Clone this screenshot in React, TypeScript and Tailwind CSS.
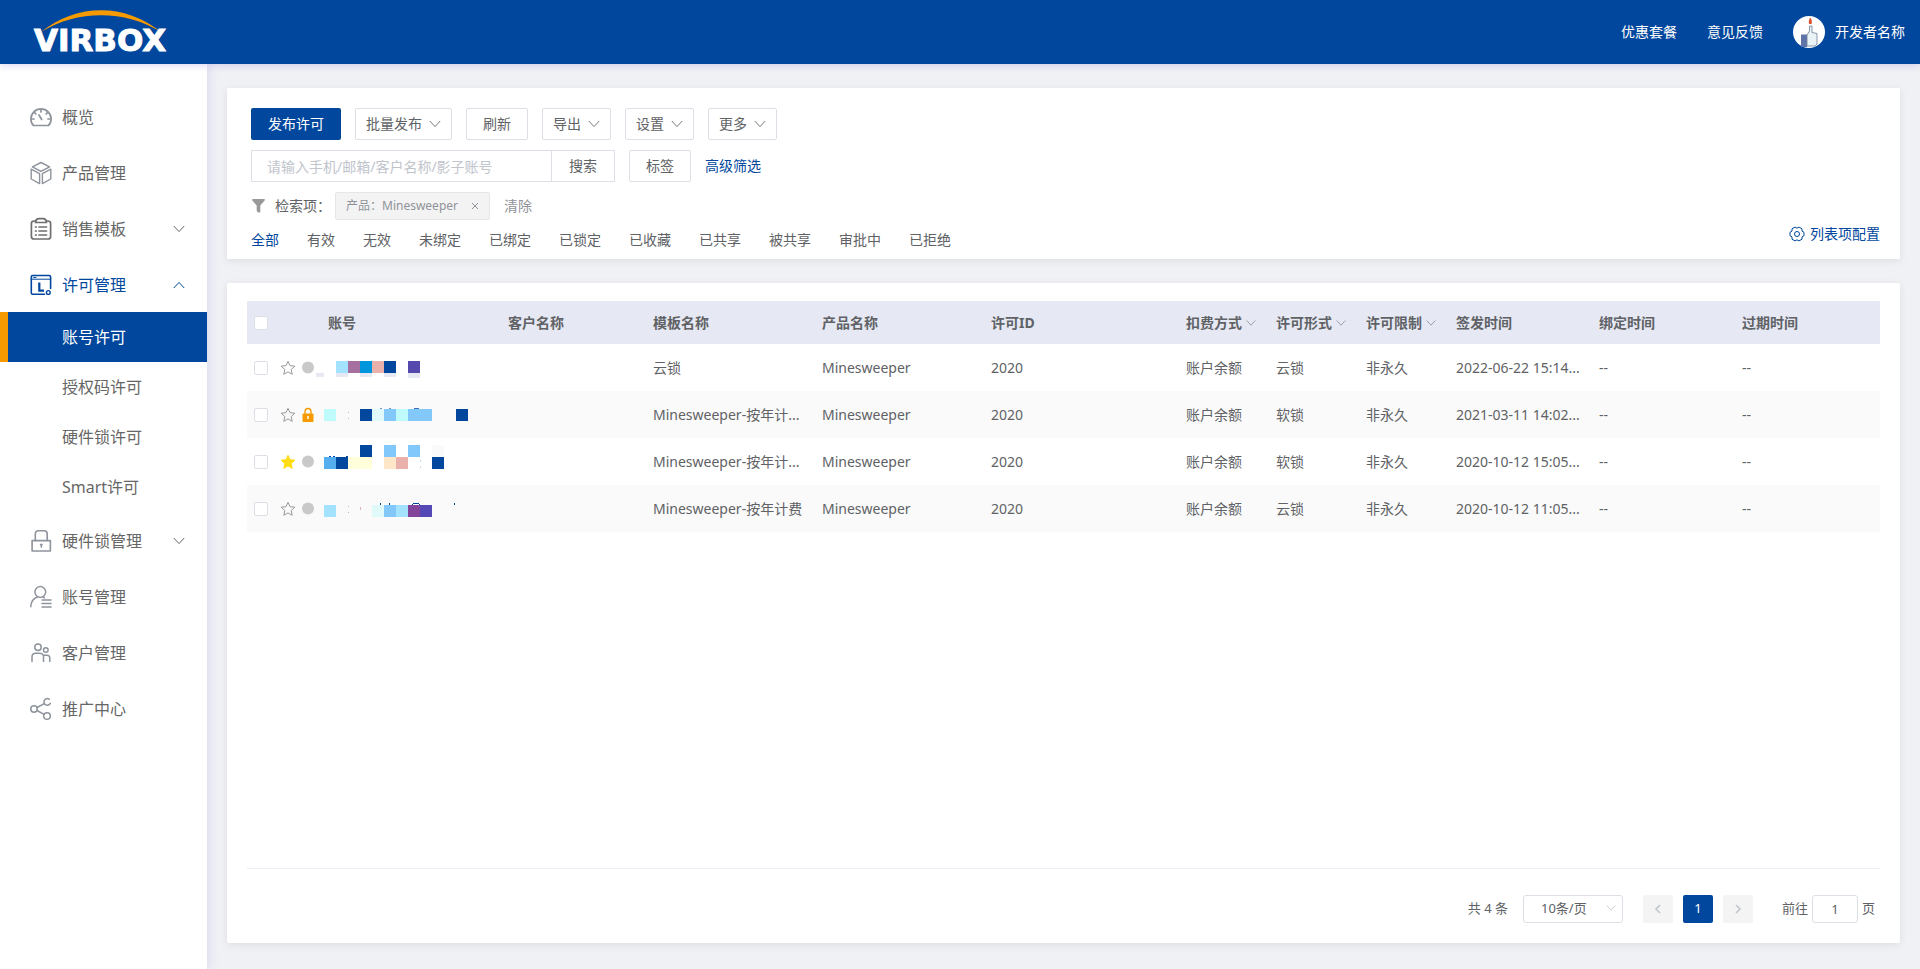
import React from "react";

const BLUE = "#00479d";

function Chevron({ up = false, className = "" }: { up?: boolean; className?: string }) {
  return (
    <svg viewBox="0 0 12 12" className={className} fill="none" stroke="currentColor" aria-hidden="true">
      <path d={up ? "M0.8 9L6 3.4L11.2 9" : "M0.8 3L6 8.6L11.2 3"} />
    </svg>
  );
}

function Logo() {
  return (
    <svg width="156" height="60" viewBox="0 0 156 60" role="img" aria-label="VIRBOX">
      <path d="M18 30C54 1 102 1 138 30C102 7.500 54 7.500 18 30Z" fill="#f59a00" />
      <text
        x="77"
        y="49"
        textAnchor="middle"
        fill="#fff"
        stroke="#fff"
        strokeWidth="1"
        fontFamily="DejaVu Sans, sans-serif"
        fontWeight="700"
        fontSize="31"
      >
        VIRBOX
      </text>
    </svg>
  );
}

const iconProps = {
  width: 24,
  height: 24,
  viewBox: "0 0 24 24",
  fill: "none",
  strokeLinecap: "round" as const,
  strokeLinejoin: "round" as const,
  "aria-hidden": true,
};

const icons: Record<string, React.ReactNode> = {
  gauge: (
    <svg {...iconProps} stroke="#8e949c" strokeWidth="1.7">
      <path d="M4.500 20.500C2.800 19 1.900 16.500 1.900 14A10.100 10.100 0 0 1 22.100 14C22.100 16.500 21.200 19 19.500 20.500Z" />
      <path d="M12 4.500V7M5.300 7.300L6.800 8.800M18.700 7.300L17.200 8.800M2.500 14H5M21.500 14H19M10 10L12.700 14.500" />
    </svg>
  ),
  cube: (
    <svg {...iconProps} stroke="#8e949c" strokeWidth="1.4">
      <path d="M12 1.500L20.600 5.800L12 10.400L3.400 5.800Z" />
      <path d="M2.200 8.200L10.600 12.600V22.600L2.200 18Z" />
      <path d="M21.800 8.200L13.400 12.600V22.600L21.800 18Z" />
    </svg>
  ),
  clipboard: (
    <svg {...iconProps} stroke="#6f6f6f" strokeWidth="1.7">
      <path d="M6.500 4H5C3.300 4 2.400 5 2.400 6.500V19.500C2.400 21.200 3.300 22 5 22H19C20.700 22 21.600 21.200 21.600 19.500V6.500C21.600 5 20.700 4 19 4H17.500" />
      <path d="M6.500 5.500C6.500 3 8 1.800 9.500 1.600H14.500C16 1.800 17.500 3 17.500 5.500Z" />
      <path d="M6.500 10H7.200M10 10H17.500M6.500 14H7.200M10 14H17.500M6.500 18H7.200M10 18H17.500" />
    </svg>
  ),
  license: (
    <svg {...iconProps} stroke={BLUE} strokeWidth="1.6">
      <path d="M15.500 21.200H3.600C2.600 21.200 2.300 20.800 2.300 20V4C2.300 3 2.800 2.500 3.600 2.500H20C21 2.500 21.600 3 21.600 4V15.500" />
      <path d="M2.300 6.200H21.600" strokeWidth="1" />
      <path d="M4.500 4.400H7" strokeWidth="1" />
      <path d="M10.300 9.500V17.600H15" strokeWidth="2.200" strokeLinecap="butt" strokeLinejoin="miter" />
      <circle cx="19.300" cy="19.500" r="1.900" strokeWidth="1.400" />
    </svg>
  ),
  lock: (
    <svg {...iconProps} stroke="#8e949c" strokeWidth="1.6">
      <path d="M3.100 11.600H21.400V22H3.100Z" />
      <path d="M6.300 11.500V5C6.300 2.800 7.300 1.800 9.500 1.800H15C17.200 1.800 18.200 2.800 18.200 5V11.500" />
      <path d="M12.300 15.400V18M11.600 15.600H13" />
    </svg>
  ),
  account: (
    <svg {...iconProps} stroke="#8e949c" strokeWidth="1.5">
      <circle cx="11.300" cy="7" r="5.400" />
      <path d="M1.800 21.700C2 16.500 4.500 13.300 8.500 12M14 12L15.500 12.800" />
      <path d="M13 14.900H22M13 18.400H22M13 21.900H22" />
    </svg>
  ),
  people: (
    <svg {...iconProps} stroke="#8e949c" strokeWidth="1.5">
      <circle cx="9" cy="6.300" r="3.200" />
      <circle cx="16.800" cy="9" r="2.300" />
      <path d="M3 20.500V16C3 13.500 4.500 12.200 6.500 12.200H10.500C12.500 12.200 14.500 13.500 14.500 15.500V20.500M14.500 14.200H18C20 14.200 20.800 15.200 20.800 17V20.500" />
    </svg>
  ),
  share: (
    <svg {...iconProps} stroke="#8e949c" strokeWidth="1.500">
      <circle cx="5" cy="12" r="3.200" />
      <circle cx="18" cy="19" r="3.300" />
      <path d="M20.300 2.300A3.300 3.300 0 1 0 21.300 6.200M8 10.500L14.800 6.800M8 13.500L15 17.300" />
    </svg>
  ),
};

function NavItem({ icon, label, open, active }: { icon: string; label: string; open?: boolean; active?: boolean }) {
  return (
    <a
      href="#"
      className={`flex h-14 items-center pt-0.5 pl-[29px] pr-[22px] text-base ${active ? "text-[#00479d]" : "text-[#666]"}`}
    >
      {icons[icon]}
      <span className="ml-[9px] flex-1">{label}</span>
      {open !== undefined && <Chevron up={open} className="size-3" />}
    </a>
  );
}

function Sidebar() {
  return (
    <nav className="w-[207px] shrink-0 bg-white pt-6 shadow-[0_0_10px_rgba(120,110,220,0.25)]">
      <NavItem icon="gauge" label="概览" />
      <NavItem icon="cube" label="产品管理" />
      <NavItem icon="clipboard" label="销售模板" open={false} />
      <NavItem icon="license" label="许可管理" open active />
      <a href="#" className="flex h-[50px] items-center border-l-8 border-[#f59a00] bg-[#00479d] pl-[54px] text-base text-white">
        账号许可
      </a>
      {["授权码许可", "硬件锁许可", "Smart许可"].map((t) => (
        <a key={t} href="#" className="flex h-[50px] items-center pl-[62px] text-base text-[#666]">
          {t}
        </a>
      ))}
      <NavItem icon="lock" label="硬件锁管理" open={false} />
      <NavItem icon="account" label="账号管理" />
      <NavItem icon="people" label="客户管理" />
      <NavItem icon="share" label="推广中心" />
    </nav>
  );
}

function Header() {
  return (
    <header className="relative z-10 flex h-16 items-center bg-[#00479d] pl-[23px] pr-[15px] text-sm text-white shadow-[0_1px_8px_rgba(120,110,220,0.3)]">
      <a href="#" className="mr-auto">
        <Logo />
      </a>
      <a href="#" className="mr-[30px]">优惠套餐</a>
      <a href="#" className="mr-[30px]">意见反馈</a>
      <a href="#" className="flex items-center gap-[10px]">
        <svg width="32" height="32" viewBox="0 0 32 32" aria-hidden="true">
          <circle cx="16" cy="16" r="16" fill="#fff" />
          <path d="M8 18.500H14V31H8Z" fill="#5f74a8" />
          <path d="M14 19L16.500 15V10H19V16.500L24 17.500V28L22 30H14Z" fill="#e9f2f4" stroke="#6f7f9c" strokeWidth="0.8" />
          <path d="M17.300 1.500C19 4 19 5.500 18.600 8H16C15.400 5.500 16 3.500 17.300 1.500Z" fill="#d9502a" />
        </svg>
        <span>开发者名称</span>
      </a>
    </header>
  );
}

const outline = "flex h-8 items-center justify-center rounded-xs border border-[#dcdfe6] bg-white text-sm text-[#606266]";

function DropButton({ label }: { label: string }) {
  return (
    <button type="button" className={`${outline} gap-[7px] px-[10px]`}>
      {label}
      <Chevron className="size-3 text-[#777]" />
    </button>
  );
}

function Filters() {
  const tabs = ["全部", "有效", "无效", "未绑定", "已绑定", "已锁定", "已收藏", "已共享", "被共享", "审批中", "已拒绝"];
  return (
    <section className="flex items-end bg-white pt-5 pr-5 pb-[9px] pl-6 text-sm shadow-[0_2px_8px_rgba(0,0,0,0.08)]">
      <div className="flex flex-1 flex-col">
        <div className="flex gap-[14px]">
          <button type="button" className="h-8 w-[90px] rounded-xs bg-[#00479d] text-sm text-white">发布许可</button>
          <DropButton label="批量发布" />
          <button type="button" className={`${outline} px-4`}>刷新</button>
          <DropButton label="导出" />
          <DropButton label="设置" />
          <DropButton label="更多" />
        </div>
        <form className="mt-[10px] flex items-center" onSubmit={(e) => e.preventDefault()}>
          <input
            aria-label="搜索"
            placeholder="请输入手机/邮箱/客户名称/影子账号"
            className="h-8 w-[301px] border border-[#dcdfe6] px-[15px] text-sm text-[#606266] placeholder:text-[#c0c4cc]"
          />
          <button type="submit" className="h-8 w-[63px] border border-l-0 border-[#dcdfe6] text-sm text-[#606266]">搜索</button>
          <button type="button" className={`${outline} ml-[14px] px-4`}>标签</button>
          <a href="#" className="ml-[14px] text-[#00479d]">高级筛选</a>
        </form>
        <div className="mt-[10px] flex h-7 items-center">
          <svg width="16" height="16" viewBox="0 0 16 16" fill="#999" aria-hidden="true">
            <path d="M1.300 1H13.700V2.500L9.300 7.500V14.500H7.500L5.700 13V7.500L1.300 2.500Z" />
          </svg>
          <span className="ml-2 w-[60px] text-[#606266]">检索项：</span>
          <span className="flex h-7 items-center rounded-xs border border-[#e6e6e8] bg-[#f3f3f4] px-[10px] text-xs text-[#909399]">
            产品：Minesweeper
            <button type="button" aria-label="移除" className="ml-[13px]">
              <svg width="8" height="8" viewBox="0 0 8 8" stroke="currentColor" aria-hidden="true">
                <path d="M1 1L7 7M7 1L1 7" />
              </svg>
            </button>
          </span>
          <button type="button" className="ml-[14px] text-sm text-[#909399]">清除</button>
        </div>
        <div className="mt-[10px] flex gap-7 leading-5">
          {tabs.map((t, i) => (
            <a key={t} href="#" className={i === 0 ? "text-[#00479d]" : "text-[#606266]"}>{t}</a>
          ))}
        </div>
      </div>
      <a href="#" className="mb-[6px] flex items-center gap-[5px] leading-5 text-[#00479d]">
        <svg width="16" height="16" viewBox="0 0 16 16" fill="none" stroke="currentColor" strokeLinejoin="round" aria-hidden="true">
          <path d="M15 6.300V9.700L13 10.900V13.200L10 14.900L8 13.800L6 14.900L3 13.200V10.900L1 9.700V6.300L3 5.100V2.800L6 1.100L8 2.200L10 1.100L13 2.800V5.100Z" />
          <circle cx="8" cy="8" r="2.500" />
        </svg>
        列表项配置
      </a>
    </section>
  );
}

type Block = [number, number, number, number, string];

const L = "#e6e9f3";
const masks: Block[][] = [
  [
    [0, 29, 8, 4, L], [20, 17, 12, 12, "#a3e3ff"], [32, 17, 12, 12, "#a56f9f"], [44, 17, 12, 12, "#0096de"],
    [56, 17, 12, 12, "#e9b0ac"], [68, 17, 12, 12, BLUE], [92, 17, 12, 12, "#5549ad"],
    [20, 29, 12, 4, L], [44, 29, 12, 4, L], [68, 29, 12, 4, L], [92, 29, 12, 5, L],
  ],
  [
    [8, 18, 12, 12, "#c0fbfb"], [44, 18, 12, 12, BLUE], [56, 18, 12, 12, "#e0fafa"], [68, 18, 12, 12, "#82c8fa"],
    [80, 18, 12, 12, "#c0fbfb"], [92, 18, 12, 12, "#82c8fa"], [104, 18, 12, 12, "#82c8fa"], [140, 18, 12, 12, BLUE],
    [32, 21, 1, 1, "#bbb"], [32, 27, 1, 1, "#bbb"], [64, 17, 2, 1, "#6a95c8"], [73, 17, 2, 1, "#6a95c8"], [98, 17, 5, 1, "#3a6fb4"],
  ],
  [
    [44, 7, 12, 12, BLUE], [68, 7, 12, 12, "#82c8fa"], [92, 7, 12, 12, "#82c8fa"], [116, 7, 12, 12, "#fafafa"],
    [8, 19, 12, 12, "#55aeee"], [20, 19, 12, 12, BLUE], [32, 19, 24, 12, "#ffffdc"], [68, 19, 12, 12, "#ffe6c8"],
    [80, 19, 12, 12, "#e9b0ac"], [116, 19, 12, 12, BLUE], [13, 18, 2, 1, BLUE], [17, 18, 2, 1, BLUE], [30, 18, 2, 1, BLUE],
    [104, 22, 1, 2, "#c5dcf0"], [104, 28, 1, 2, "#c5dcf0"],
  ],
  [
    [8, 20, 12, 12, "#a3e3ff"], [56, 20, 12, 12, "#e0fafa"], [68, 20, 12, 12, "#82c8fa"], [80, 20, 12, 12, "#a3e3ff"],
    [92, 20, 12, 12, "#83459a"], [104, 20, 12, 12, "#5549b5"], [32, 21, 1, 1, "#bbb"], [32, 27, 1, 1, "#bbb"], [44, 22, 1, 3, "#d9b4cc"],
    [64, 18, 1, 2, BLUE], [73, 18, 1, 2, BLUE], [97, 18, 6, 1, BLUE], [96, 19, 1, 1, BLUE], [103, 19, 1, 1, BLUE], [138, 18, 1, 2, BLUE],
  ],
];

const rows = [
  { star: false, locked: false, template: "云锁", form: "云锁", time: "2022-06-22 15:14..." },
  { star: false, locked: true, template: "Minesweeper-按年计...", form: "软锁", time: "2021-03-11 14:02..." },
  { star: true, locked: false, template: "Minesweeper-按年计...", form: "软锁", time: "2020-10-12 15:05..." },
  { star: false, locked: false, template: "Minesweeper-按年计费", form: "云锁", time: "2020-10-12 11:05..." },
];

const columns: { label: string; width: string; drop?: boolean }[] = [
  { label: "客户名称", width: "w-[145px]" },
  { label: "模板名称", width: "w-[169px]" },
  { label: "产品名称", width: "w-[169px]" },
  { label: "许可ID", width: "w-[195px]" },
  { label: "扣费方式", width: "w-[90px]", drop: true },
  { label: "许可形式", width: "w-[90px]", drop: true },
  { label: "许可限制", width: "w-[90px]", drop: true },
  { label: "签发时间", width: "w-[143px]" },
  { label: "绑定时间", width: "w-[143px]" },
  { label: "过期时间", width: "w-[148px]" },
];

function Check({ label }: { label: string }) {
  return (
    <input
      type="checkbox"
      aria-label={label}
      className="block size-[14px] appearance-none rounded-xs border border-[#dcdfe6] bg-white checked:bg-[#00479d]"
    />
  );
}

function LicenseTable() {
  return (
    <table className="w-full table-fixed text-left text-sm text-[#606266]">
      <thead>
        <tr className="h-[43px] bg-[#e6e9f3]">
          <th className="w-[27px] pl-[7px]"><Check label="全选" /></th>
          <th className="w-[224px] pl-[54px]">账号</th>
          {columns.map((c) => (
            <th key={c.label} className={`${c.width} pl-[10px] whitespace-nowrap`}>
              <span className="flex items-center gap-1">
                {c.label}
                {c.drop && <Chevron className="size-[10px] text-[#909399]" />}
              </span>
            </th>
          ))}
        </tr>
      </thead>
      <tbody>
        {rows.map((r, i) => (
          <tr key={i} className="h-[47px] even:bg-[#fafafa]">
            <td className="pl-[7px]"><Check label={`选择第${i + 1}行`} /></td>
            <td className="pl-[6px]">
              <div className="flex items-center">
                <svg width="16" height="16" viewBox="0 0 16 16" fill={r.star ? "#fddc14" : "none"} stroke={r.star ? "#fddc14" : "#999"} strokeLinejoin="round" aria-hidden="true">
                  <path d="M8 1.300L10 5.700L14.800 6.200L11.200 9.500L12.200 14.300L8 11.900L3.800 14.300L4.800 9.500L1.200 6.200L6 5.700Z" />
                </svg>
                <svg width="14" height="16" viewBox="0 0 14 16" className="ml-[5px]" aria-hidden="true">
                  {r.locked ? (
                    <>
                      <path d="M4 7V4.500A3 3 0 0 1 10 4.500V7" fill="none" stroke="#f59a00" strokeWidth="1.300" />
                      <rect x="1.500" y="6.500" width="11" height="8.500" rx="1" fill="#f59a00" />
                      <path d="M7 9V12" stroke="#fff" strokeWidth="1.500" />
                    </>
                  ) : (
                    <circle cx="7" cy="7.500" r="6" fill="#c9c9c9" />
                  )}
                </svg>
                <svg width="160" height="47" viewBox="0 0 160 47" className="ml-px" aria-hidden="true">
                  {masks[i].map(([x, y, w, h, fill], k) => (
                    <rect key={k} x={x} y={y} width={w} height={h} fill={fill} />
                  ))}
                </svg>
              </div>
            </td>
            <td />
            <td className="pl-[10px] whitespace-nowrap">{r.template}</td>
            <td className="pl-[10px]">Minesweeper</td>
            <td className="pl-[10px]">2020</td>
            <td className="pl-[10px] whitespace-nowrap">账户余额</td>
            <td className="pl-[10px]">{r.form}</td>
            <td className="pl-[10px] whitespace-nowrap">非永久</td>
            <td className="pl-[10px] whitespace-nowrap">{r.time}</td>
            <td className="pl-[10px]">--</td>
            <td className="pl-[10px]">--</td>
          </tr>
        ))}
      </tbody>
    </table>
  );
}

function Pagination() {
  return (
    <div className="flex items-center justify-end border-t border-[#ebeef5] pt-[26px] pr-[5px] text-[13px] text-[#606266]">
      <span>共 4 条</span>
      <div className="relative ml-[15px]">
        <select aria-label="每页条数" className="block h-7 w-[100px] appearance-none rounded-[3px] border border-[#dcdfe6] bg-white pl-[17px] text-[13px]">
          <option>10条/页</option>
        </select>
        <Chevron className="pointer-events-none absolute top-2 right-[7px] size-[10px] text-[#c0c4cc]" />
      </div>
      <button type="button" aria-label="上一页" className="ml-5 flex h-7 w-[30px] items-center justify-center rounded-xs bg-[#f4f4f5] text-[#c0c4cc]">
        <svg width="12" height="12" viewBox="0 0 12 12" fill="none" stroke="currentColor" strokeWidth="1.600" aria-hidden="true">
          <path d="M8 2L4 6L8 10" />
        </svg>
      </button>
      <button type="button" className="ml-[10px] h-7 w-[30px] rounded-xs bg-[#00479d] text-[13px] text-white">1</button>
      <button type="button" aria-label="下一页" className="ml-[10px] flex h-7 w-[30px] items-center justify-center rounded-xs bg-[#f4f4f5] text-[#c0c4cc]">
        <svg width="12" height="12" viewBox="0 0 12 12" fill="none" stroke="currentColor" strokeWidth="1.600" aria-hidden="true">
          <path d="M4 2L8 6L4 10" />
        </svg>
      </button>
      <label className="ml-[29px] flex items-center gap-1">
        前往
        <input defaultValue="1" className="h-7 w-[46px] rounded-[3px] border border-[#dcdfe6] text-center text-[13px]" />
        页
      </label>
    </div>
  );
}

export default function App() {
  return (
    <div className="flex min-h-screen flex-col bg-[#f0f1f5] font-['Noto_Sans','Noto_Sans_CJK_SC',sans-serif]">
      <Header />
      <div className="flex flex-1">
        <Sidebar />
        <main className="flex min-w-0 flex-1 flex-col gap-6 px-5 pt-6 pb-[26px]">
          <Filters />
          <section className="flex flex-1 flex-col justify-between rounded-xs bg-white px-5 pt-[18px] pb-5 shadow-[0_2px_8px_rgba(0,0,0,0.08)]">
            <LicenseTable />
            <Pagination />
          </section>
        </main>
      </div>
    </div>
  );
}
